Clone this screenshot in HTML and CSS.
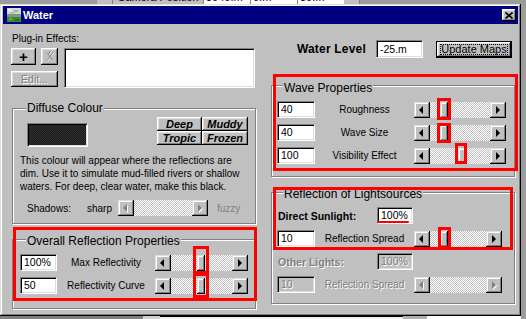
FILE: index.html
```html
<!DOCTYPE html>
<html lang="en">
<head>
  <meta charset="UTF-8" />
  <title>Water</title>
  <link rel="stylesheet" href="styles.css">
</head>
<body>
  <!-- edge of the window behind -->
  <div class="behind-top">
    <span class="bt-btn"></span>
    <span class="bt-label">Camera Position</span>
    <span class="bt-value">3040.m</span>
    <span class="bt-value">0.m</span>
    <span class="bt-value">30.m</span>
    <span class="bt-btn"></span>
  </div>

  <div class="window">
    <div class="titlebar">
      <svg class="app-icon" width="14" height="14" viewBox="0 0 14 14">
        <rect width="14" height="14" fill="#9aa39e"/>
        <rect width="14" height="6" fill="#d2d8d4"/>
        <rect x="1" y="1" width="3" height="2" fill="#f4f6f4"/>
        <rect x="7" y="2" width="4" height="2" fill="#a8b0ac"/>
        <rect x="3" y="4" width="5" height="2" fill="#b8c0bc"/>
        <rect y="6" width="14" height="3" fill="#7f9a84"/>
        <rect y="9" width="14" height="5" fill="#3c8a34"/>
        <rect x="2" y="10" width="3" height="2" fill="#62b04a"/>
        <rect x="8" y="11" width="4" height="2" fill="#2a6a24"/>
      </svg>
      <span class="title">Water</span>
      <span class="close-btn">
        <svg width="8" height="7" viewBox="0 0 8 7">
          <path d="M0.5 0.5 L7.5 6.5 M7.5 0.5 L0.5 6.5" stroke="#000" stroke-width="1.6"/>
        </svg>
      </span>
    </div>

    <div class="client">
      <div class="col col-left">
        <div class="plugins">
          <div class="plugins-label">Plug-in Effects:</div>
          <div class="plugins-row">
            <div class="plugin-btns">
              <span class="btn btn-add">+</span>
              <span class="btn btn-del">
                <svg width="10" height="11" viewBox="0 0 10 11">
                  <path d="M2.5 2 L8.5 10 M8.5 2 L2.5 10 M6 0.5 L4 4" stroke="#fff" stroke-width="1"/>
                  <path d="M2 1.5 L8 9.5 M8 1.5 L2 9.5 M5.5 0 L3.5 3.5" stroke="#808080" stroke-width="1"/>
                </svg>
              </span>
              <span class="btn btn-edit disabled">Edit...</span>
            </div>
            <div class="listbox"></div>
          </div>
        </div>

        <div class="group diffuse">
          <div class="group-title">Diffuse Colour</div>
          <div class="swatch-row">
            <div class="swatch"></div>
            <div class="presets">
              <span class="btn preset">Deep</span>
              <span class="btn preset">Muddy</span>
              <span class="btn preset">Tropic</span>
              <span class="btn preset">Frozen</span>
            </div>
          </div>
          <p class="note">This colour will appear where the reflections are<br>dim. Use it to simulate mud-filled rivers or shallow<br>waters. For deep, clear water, make this black.</p>
          <div class="shadows-row">
            <span class="shadows-label">Shadows:</span>
            <span class="sharp">sharp</span>
            <div class="scroll scroll-shadows disabled">
              <span class="sb-btn sb-left"></span>
              <span class="sb-track"></span>
              <span class="sb-btn sb-right"></span>
            </div>
            <span class="fuzzy">fuzzy</span>
          </div>
        </div>

        <div class="group overall">
          <div class="group-title">Overall Reflection Properties</div>
          <div class="slider-row">
            <span class="field field-small">100%</span>
            <span class="slider-label">Max Reflectivity</span>
            <div class="scroll scroll-overall">
              <span class="sb-btn sb-left"></span>
              <span class="sb-track"><span class="sb-thumb" style="margin-left: 26px"></span></span>
              <span class="sb-btn sb-right"></span>
            </div>
          </div>
          <div class="slider-row">
            <span class="field field-small">50</span>
            <span class="slider-label">Reflectivity Curve</span>
            <div class="scroll scroll-overall">
              <span class="sb-btn sb-left"></span>
              <span class="sb-track"><span class="sb-thumb" style="margin-left: 26px"></span></span>
              <span class="sb-btn sb-right"></span>
            </div>
          </div>
        </div>
      </div>

      <div class="col col-right">
        <div class="water-row">
          <span class="water-label">Water Level</span>
          <span class="field field-water">-25.m</span>
          <span class="btn btn-default"><span class="focus">Update Maps</span></span>
        </div>

        <div class="group wave">
          <div class="group-title">Wave Properties</div>
          <div class="slider-row">
            <span class="field">40</span>
            <span class="slider-label">Roughness</span>
            <div class="scroll scroll-wave">
              <span class="sb-btn sb-left"></span>
              <span class="sb-track"><span class="sb-thumb" style="margin-left: 10px"></span></span>
              <span class="sb-btn sb-right"></span>
            </div>
          </div>
          <div class="slider-row">
            <span class="field">40</span>
            <span class="slider-label">Wave Size</span>
            <div class="scroll scroll-wave">
              <span class="sb-btn sb-left"></span>
              <span class="sb-track"><span class="sb-thumb" style="margin-left: 10px"></span></span>
              <span class="sb-btn sb-right"></span>
            </div>
          </div>
          <div class="slider-row">
            <span class="field">100</span>
            <span class="slider-label">Visibility Effect</span>
            <div class="scroll scroll-wave">
              <span class="sb-btn sb-left"></span>
              <span class="sb-track"><span class="sb-thumb" style="margin-left: 28px"></span></span>
              <span class="sb-btn sb-right"></span>
            </div>
          </div>
        </div>

        <div class="group lights">
          <div class="group-title">Reflection of Lightsources</div>
          <div class="light-row">
            <span class="light-label">Direct Sunlight:</span>
            <span class="field field-pct">100%</span>
          </div>
          <div class="slider-row">
            <span class="field">10</span>
            <span class="slider-label">Reflection Spread</span>
            <div class="scroll scroll-lights">
              <span class="sb-btn sb-left"></span>
              <span class="sb-track"><span class="sb-thumb" style="margin-left: 10px"></span></span>
              <span class="sb-btn sb-right"></span>
            </div>
          </div>
          <div class="light-row">
            <span class="light-label disabled">Other Lights:</span>
            <span class="field field-pct disabled">100%</span>
          </div>
          <div class="slider-row">
            <span class="field disabled">10</span>
            <span class="slider-label disabled">Reflection Spread</span>
            <div class="scroll scroll-lights disabled">
              <span class="sb-btn sb-left"></span>
              <span class="sb-track"></span>
              <span class="sb-btn sb-right"></span>
            </div>
          </div>
        </div>
      </div>
    </div>

    <!-- red highlight marks drawn over the dialog -->
    <div class="mark mark-wave"></div>
    <div class="mark mark-rough"></div>
    <div class="mark mark-wavesize"></div>
    <div class="mark mark-visib"></div>
    <div class="mark mark-lights"></div>
    <div class="mark mark-spread"></div>
    <div class="underline"></div>
    <div class="mark mark-overall"></div>
    <div class="mark mark-max"></div>
    <div class="mark mark-curve"></div>
  </div>

  <div class="behind-bottom">
    <span class="bb-dark"></span>
    <span class="bb-grey"></span>
    <span class="bb-white"></span>
    <span class="bb-grey2"></span>
    <span class="bb-white2"></span>
  </div>
</body>
</html>
```

FILE: styles.css
```css
body {
  margin: 0;
  width: 526px;
  height: 319px;
  overflow: hidden;
  background-color: #9c9c9c;
  font-family: "Liberation Sans", Arial, sans-serif;
  font-size: 10px;
  color: #000;
}

/* window behind */
.behind-top {
  display: flex;
  height: 4px;
  overflow: hidden;
  padding-left: 97px;
}

.behind-top span {
  display: block;
  height: 13px;
  margin-top: -9px;
  line-height: 12px;
  font-size: 11px;
  white-space: nowrap;
  overflow: hidden;
}

.bt-btn {
  width: 15px;
  background-color: #c0c0c0;
  border-right: 1px solid #808080;
}

.bt-label {
  width: 90px;
  background-color: #c0c0c0;
  text-align: center;
}

.bt-value {
  width: 44px;
  padding-left: 2px;
  background-color: #fff;
  border-left: 1px solid #808080;
}

.behind-bottom {
  display: flex;
  height: 3px;
}

.behind-bottom span {
  display: block;
}

.bb-dark { width: 143px; background-color: #808080; }
.bb-grey { width: 17px; background-color: #d0d0d0; }
.bb-white { width: 243px; background-color: #f0f0f0; border-top: 1px solid #000; }
.bb-grey2 { width: 24px; background-color: #b0b0b0; }
.bb-white2 { width: 94px; background-color: #fff; }

/* dialog window */
.window {
  position: relative;
  box-sizing: border-box;
  width: 521px;
  height: 312px;
  padding: 2px 3px 3px;
  background-color: #c0c0c0;
  box-shadow: inset -1px -1px #000, inset 1px 1px #dfdfdf,
              inset -2px -2px #808080, inset 2px 2px #fff;
}

.titlebar {
  display: flex;
  align-items: center;
  height: 18px;
  padding: 0 2px 0 4px;
  background-color: #000080;
  color: #fff;
}

.app-icon {
  margin-right: 2px;
}

.title {
  flex: 1;
  font-size: 11px;
  font-weight: bold;
}

.close-btn {
  display: flex;
  align-items: center;
  justify-content: center;
  width: 14px;
  height: 12px;
  background-color: #c0c0c0;
  box-shadow: inset -1px -1px #000, inset 1px 1px #fff,
              inset -2px -2px #808080, inset 2px 2px #dfdfdf;
}

.client {
  display: flex;
  gap: 15px;
  padding-left: 8px;
}

.col-left {
  width: 245px;
}

.col-right {
  width: 244px;
}

/* common controls */
.btn {
  display: flex;
  align-items: center;
  justify-content: center;
  box-sizing: border-box;
  background-color: #c0c0c0;
  box-shadow: inset -1px -1px #000, inset 1px 1px #fff,
              inset -2px -2px #808080, inset 2px 2px #dfdfdf;
}

.disabled {
  color: #808080;
  text-shadow: 1px 1px 0 #fff;
}

.field {
  display: block;
  box-sizing: border-box;
  width: 38px;
  height: 17px;
  padding-left: 3px;
  line-height: 15px;
  font-size: 10.5px;
  background-color: #fff;
  border: 1px solid;
  border-color: #808080 #fff #fff #808080;
  box-shadow: inset 1px 1px #000, inset -1px -1px #dfdfdf;
}

.field.disabled {
  background-color: #c0c0c0;
}

.field-small {
  width: 37px;
}

.scroll {
  display: flex;
  height: 16px;
}

.sb-btn {
  position: relative;
  width: 16px;
  flex: none;
  background-color: #c0c0c0;
  box-shadow: inset -1px -1px #000, inset 1px 1px #dfdfdf,
              inset -2px -2px #808080, inset 2px 2px #fff;
}

.sb-btn::after {
  content: "";
  position: absolute;
  top: 4px;
  border-top: 4px solid transparent;
  border-bottom: 4px solid transparent;
}

.sb-left::after {
  left: 5px;
  border-right: 4px solid #000;
}

.sb-right::after {
  left: 6px;
  border-left: 4px solid #000;
}

.scroll.disabled .sb-left::after {
  border-right-color: #808080;
  filter: drop-shadow(1px 1px 0 #fff);
}

.scroll.disabled .sb-right::after {
  border-left-color: #808080;
  filter: drop-shadow(1px 1px 0 #fff);
}

.sb-track {
  display: flex;
  flex: 1;
  background: repeating-conic-gradient(#c0c0c0 0 25%, #fff 0 50%) 0 0 / 2px 2px;
}

.sb-thumb {
  width: 8px;
  height: 16px;
  background-color: #c0c0c0;
  box-shadow: inset -1px -1px #000, inset 1px 1px #dfdfdf,
              inset -2px -2px #808080, inset 2px 2px #fff;
}

/* group boxes */
.group {
  box-sizing: border-box;
  border: 1px solid #808080;
  box-shadow: inset 1px 1px #fff, 1px 1px #fff;
}

.group-title {
  display: table;
  margin: -8px 0 0 6px;
  padding: 0 1px;
  background-color: #c0c0c0;
  font-size: 12px;
  line-height: 14px;
}

.slider-row {
  display: flex;
  align-items: center;
  height: 17px;
  margin-top: 6px;
}

.slider-label {
  flex: 1;
  text-align: center;
  white-space: nowrap;
}

/* plug-ins */
.plugins {
  padding-top: 8px;
}

.plugins-label {
  padding-left: 1px;
  line-height: 13px;
}

.plugins-row {
  display: flex;
  margin-top: 3px;
}

.plugin-btns {
  display: grid;
  grid-template-columns: 25px 17px;
  grid-template-rows: 17px 16px;
  column-gap: 5px;
  row-gap: 6px;
  align-content: start;
}

.btn-add {
  font-size: 15px;
  font-weight: bold;
  line-height: 1;
}

.btn-edit {
  grid-column: 1 / 3;
  font-size: 10.5px;
}

.listbox {
  box-sizing: border-box;
  width: 191px;
  height: 40px;
  margin-left: 6px;
  background-color: #fff;
  border: 1px solid;
  border-color: #808080 #fff #fff #808080;
  box-shadow: inset 1px 1px #000, inset -1px -1px #dfdfdf;
}

/* diffuse colour */
.diffuse {
  width: 244px;
  margin: 20px 0 0 1px;
  padding: 0 7px 7px;
}

.swatch-row {
  display: flex;
  justify-content: space-between;
  align-items: flex-start;
  margin-top: 2px;
}

.swatch {
  box-sizing: border-box;
  width: 61px;
  height: 24px;
  margin: 6px 0 0 7px;
  background: repeating-conic-gradient(#1e1e1e 0 25%, #2e2e2e 0 50%) 0 0 / 2px 2px;
  border: 1px solid;
  border-color: #808080 #fff #fff #808080;
  box-shadow: inset 1px 1px #000, inset -1px -1px #dfdfdf;
}

.presets {
  display: grid;
  grid-template-columns: 45px 46px;
  grid-template-rows: 14px 14px;
}

.preset {
  font-size: 11px;
  font-weight: bold;
  font-style: italic;
}

.note {
  margin: 7px 0 0;
  line-height: 13px;
  white-space: nowrap;
}

.shadows-row {
  display: flex;
  align-items: center;
  height: 16px;
  margin-top: 7px;
}

.shadows-label {
  width: 60px;
  margin-left: 7px;
}

.sharp {
  width: 31px;
}

.scroll-shadows {
  width: 90px;
}

.fuzzy {
  margin-left: 9px;
  color: #808080;
}

/* overall reflection */
.overall {
  width: 244px;
  margin: 15px 0 0 1px;
  padding: 2px 7px 14px;
}

.scroll-overall {
  width: 93px;
}

/* right column */
.water-row {
  display: flex;
  align-items: center;
  justify-content: flex-end;
  height: 18px;
  margin-top: 16px;
  padding-right: 3px;
}

.water-label {
  margin-right: 10px;
  font-size: 12px;
  font-weight: bold;
  letter-spacing: 0.2px;
}

.field-water {
  width: 47px;
  height: 18px;
  line-height: 16px;
}

.btn-default {
  width: 76px;
  height: 17px;
  margin-left: 13px;
  border: 1px solid #000;
  font-size: 11px;
}

.focus {
  display: block;
  box-sizing: border-box;
  width: 68px;
  height: 11px;
  line-height: 9px;
  text-align: center;
  border: 1px dotted #000;
}

.wave {
  width: 244px;
  margin-top: 27px;
  padding: 3px 8px 12px 5px;
}

.scroll-wave {
  width: 92px;
}

.lights {
  width: 244px;
  margin-top: 15px;
  padding: 2px 8px 10px 5px;
}

.lights .slider-row,
.light-row {
  margin-top: 6px;
}

.light-row {
  display: flex;
  align-items: center;
  height: 17px;
}

.light-label {
  width: 99px;
  margin-left: 1px;
  font-size: 10.5px;
  font-weight: bold;
}

.field-pct {
  width: 36px;
}

.scroll-lights {
  width: 88px;
  margin-right: 4px;
}

/* red highlight marks */
.mark {
  position: absolute;
  box-sizing: border-box;
  border: 3px solid #f00;
}

.mark-wave { left: 273px; top: 70px; width: 245px; height: 97px; }
.mark-rough { left: 437px; top: 94px; width: 14px; height: 22px; }
.mark-wavesize { left: 437px; top: 119px; width: 14px; height: 20px; }
.mark-visib { left: 455px; top: 139px; width: 12px; height: 21px; }
.mark-lights { left: 273px; top: 183px; width: 240px; height: 63px; }
.mark-spread { left: 438px; top: 223px; width: 13px; height: 22px; }
.mark-overall { left: 13px; top: 223px; width: 244px; height: 74px; }
.mark-max { left: 193px; top: 242px; width: 16px; height: 28px; }
.mark-curve { left: 193px; top: 269px; width: 16px; height: 25px; }

.underline {
  position: absolute;
  left: 377px;
  top: 217px;
  width: 32px;
  height: 2px;
  border-radius: 1px;
  background-color: #f00;
}
```
